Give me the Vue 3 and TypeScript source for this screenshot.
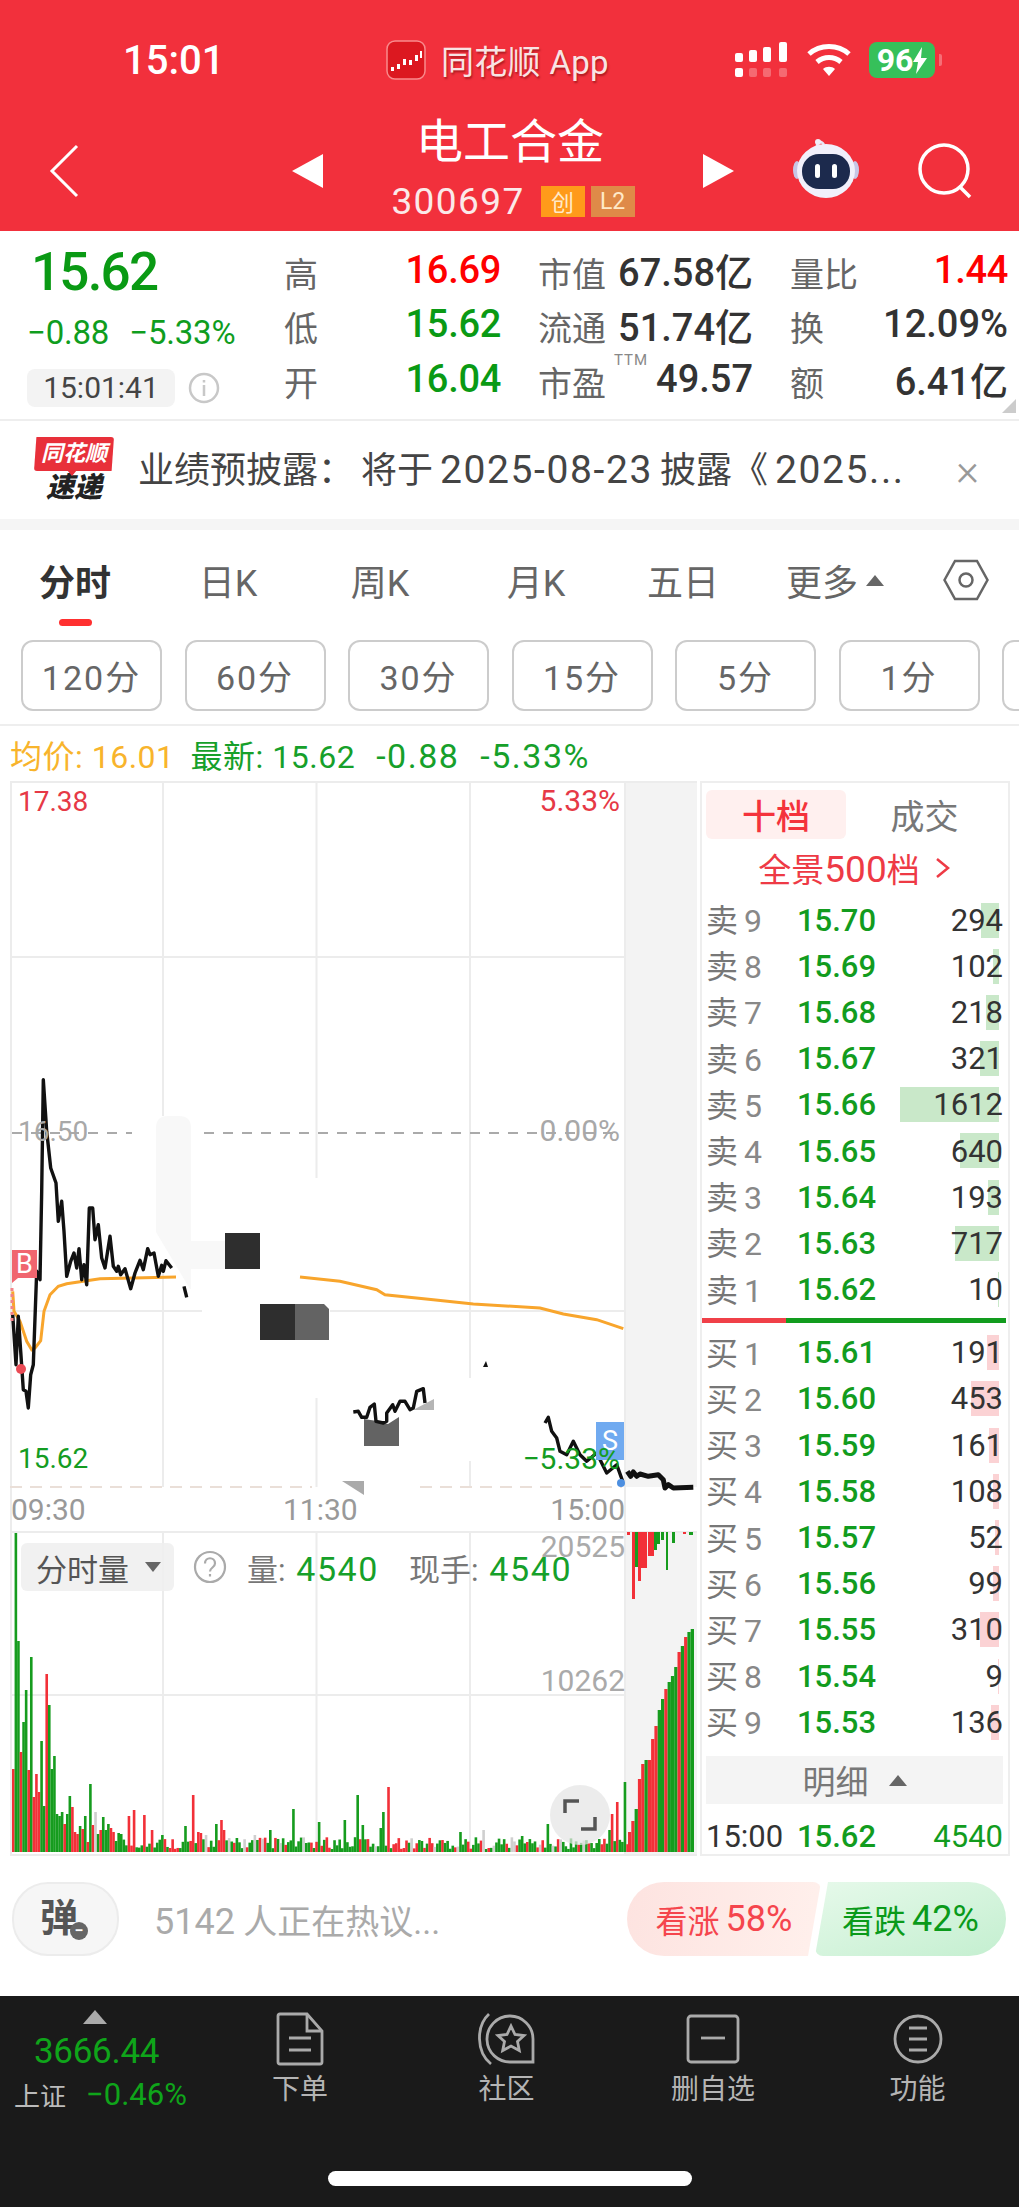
<template>
  <div class="page">
    <header class="header">
      <div class="status">
        <span class="clock">15:01</span>
        <div class="app-tag">
          <svg class="app-icon" width="40" height="40" viewBox="0 0 40 40">
            <rect x="1" y="1" width="38" height="38" rx="8" fill="#dc1820" stroke="#f98a8c" stroke-width="1.5" />
            <path d="M5 27h3v4H5zM11 24h3v5h-3zM17 19h3v6h-3zM23 20h3v5h-3zM29 15h3v6h-3zM34 11h2v7h-2z" fill="#fff" />
          </svg>
          <span class="app-name">同花顺 App</span>
        </div>
        <div class="status-right">
          <svg width="53" height="36" viewBox="0 0 53 36" fill="#fff">
            <rect x="1" y="11" width="8" height="9" rx="2" />
            <rect x="15" y="8" width="8" height="12" rx="2" />
            <rect x="29" y="5" width="8" height="15" rx="2" />
            <rect x="45" y="0" width="8" height="20" rx="2" />
            <rect x="1" y="26" width="8" height="9" rx="2" />
            <g opacity="0.28">
              <rect x="15" y="26" width="8" height="9" rx="2" />
              <rect x="29" y="26" width="8" height="9" rx="2" />
              <rect x="45" y="26" width="8" height="9" rx="2" />
            </g>
          </svg>
          <svg class="wifi" width="46" height="34" viewBox="0 0 46 34" fill="none" stroke="#fff" stroke-width="5">
            <path d="M3 11C14 1 32 1 43 11" />
            <path d="M11 19c7-6 17-6 24 0" />
            <path d="M23 33l-6-7c3-3 9-3 12 0z" fill="#fff" stroke="none" />
          </svg>
          <div class="battery">
            <span>96</span>
            <svg width="14" height="27" viewBox="0 0 14 27"><path d="M9 0L0 15h5l-2 12 11-16H8z" fill="#fff" /></svg>
          </div>
          <span class="battery-nub"></span>
        </div>
      </div>
      <div class="nav">
        <svg class="back" width="30" height="54" viewBox="0 0 30 54" fill="none" stroke="#fff" stroke-width="3">
          <path d="M28 2L3 27l25 25" />
        </svg>
        <span class="tri tri-left"></span>
        <div class="title">
          <div class="stock-name">电工合金</div>
          <div class="stock-code">
            <span class="code-num">300697</span>
            <span class="badge badge-chuang">创</span>
            <span class="badge badge-l2">L2</span>
          </div>
        </div>
        <span class="tri tri-right"></span>
        <svg class="robot" width="66" height="62" viewBox="0 0 66 62">
          <path d="M24 12C23 4 28 3 31 8" fill="none" stroke="#e8e4f4" stroke-width="2.5" />
          <circle cx="25" cy="5" r="3" fill="#f0eef8" />
          <ellipse cx="4" cy="33" rx="4" ry="9" fill="#c7c6e6" />
          <ellipse cx="62" cy="33" rx="4" ry="9" fill="#c7c6e6" />
          <ellipse cx="33" cy="34" rx="29" ry="27" fill="#f1f0fb" />
          <rect x="9" y="17" width="48" height="35" rx="17" fill="#1c2a4d" />
          <rect x="22" y="27" width="5" height="14" rx="2.5" fill="#fff" />
          <rect x="39" y="27" width="5" height="14" rx="2.5" fill="#fff" />
        </svg>
        <svg class="search" width="56" height="56" viewBox="0 0 56 56" fill="none" stroke="#fff" stroke-width="3.5">
          <circle cx="27" cy="26" r="24" />
          <path d="M42 43l11 11" />
        </svg>
      </div>
    </header>

    <section class="quote">
      <div class="quote-left">
        <div class="last-price">15.62</div>
        <div class="change-line"><span>−0.88</span><span>−5.33%</span></div>
        <div class="time-line">
          <span class="time-pill">15:01:41</span>
          <svg width="32" height="32" viewBox="0 0 32 32" fill="none" stroke="#c8c8c8" stroke-width="2.5">
            <circle cx="16" cy="16" r="14" />
            <path d="M16 13v11M16 8v2.5" />
          </svg>
        </div>
      </div>
      <div class="quote-grid">
        <div v-for="cell in quoteCells" :key="cell.label" class="quote-cell">
          <span class="quote-label">{{ cell.label }}<sup v-if="cell.ttm" class="ttm">TTM</sup></span>
          <span class="quote-value" :class="cell.tone">{{ cell.value }}</span>
        </div>
      </div>
      <span class="corner"></span>
    </section>

    <section class="notice">
      <div class="notice-logo">
        <div class="logo-tag">同花顺</div>
        <div class="logo-text">速递</div>
      </div>
      <p class="notice-text">业绩预披露：<span class="notice-rest">将于<b>2025-08-23</b>披露《<b>2025...</b></span></p>
      <span class="notice-close">×</span>
    </section>
    <div class="band"></div>

    <nav class="tabs">
      <span class="tab active">分时</span>
      <span class="tab">日K</span>
      <span class="tab">周K</span>
      <span class="tab">月K</span>
      <span class="tab">五日</span>
      <span class="tab">更多<i class="more-caret"></i></span>
      <span class="tab">
        <svg width="46" height="42" viewBox="0 0 46 42" fill="none" stroke="#666" stroke-width="2.5">
          <path d="M1.5 21L12 2h22l10.500 19L34 40H12z" />
          <circle cx="23" cy="21" r="6.5" />
        </svg>
      </span>
    </nav>
    <div class="periods">
      <span v-for="p in periods" :key="p" class="period">{{ p }}</span>
      <span class="period"></span>
    </div>
    <div class="legend">
      <span class="avg">均价: 16.01</span>
      <span class="latest">最新: 15.62</span>
      <span class="delta">-0.88</span>
      <span class="delta">-5.33%</span>
    </div>

    <main class="market">
      <div class="chart">
        <svg width="700" height="1075" viewBox="0 783 700 1075">
          <rect x="625" y="783" width="72" height="706" fill="#f3f3f3" />
          <rect x="625" y="1534" width="72" height="324" fill="#f3f3f3" />
          <path :d="gridPath" stroke="#ececec" stroke-width="2" fill="none" />
          <path d="M10 1489H312M420 1489H622" stroke="#eadfd8" stroke-width="2" stroke-dasharray="12 8" />
          <path d="M12 1135H132M204 1135H622" stroke="#aaa" stroke-width="2" stroke-dasharray="10 9" />

          <path d="M156 1130q0-12 12-12h11q12 0 12 12v113h34v28h-34v20h-1l-34-57z" fill="#f8f8f8" />
          <rect x="225" y="1235" width="35" height="36" fill="#2e2e2e" />
          <rect x="260" y="1306" width="35" height="36" fill="#2e2e2e" />
          <path d="M295 1306h29l5 5v31h-34z" fill="#636363" />
          <path d="M364 1421l13 2 11 3 11-7v29h-35z" fill="#636363" />
          <path d="M413 1412l21-11v11z" fill="#b5b5b5" />
          <path d="M342 1483h22v14z" fill="#aaa" />

          <polyline :points="avgLeft" class="avg-line" />
          <polyline :points="avgRight" class="avg-line" />
          <polyline :points="priceA" class="price-line" />
          <polyline :points="priceB" class="price-line" />
          <polyline :points="priceC" class="price-line" />
          <polyline :points="priceD" class="price-line" />
          <polyline :points="priceE" class="price-line thick" />
          <path d="M483 1369l3-6 2 6z" fill="#111" />

          <path d="M12 1252h25v28H18l-6 5z" fill="#f0666f" />
          <text x="24.5" y="1275" class="tag-text">B</text>
          <path d="M12 1290v34" stroke="#f3838a" stroke-width="3" stroke-dasharray="3 3" />
          <circle cx="21" cy="1371" r="5" fill="#ea4b55" />
          <rect x="596" y="1424" width="28" height="38" fill="#70aaf0" />
          <text x="610" y="1452" class="tag-text">S</text>
          <circle cx="621" cy="1485" r="4" fill="#4d8fe0" />

          <text x="18" y="813" class="label narrow" fill="#e63946">17.38</text>
          <text x="620" y="813" class="label end" fill="#e63946">5.33%</text>
          <text x="18" y="1143" class="label narrow" fill="#a8a8a8">16.50</text>
          <text x="620" y="1143" class="label end" fill="#a8a8a8">0.00%</text>
          <text x="18" y="1470" class="label narrow" fill="#149c22">15.62</text>
          <text x="620" y="1471" class="label end" fill="#149c22">−5.33%</text>
          <text x="11" y="1522" class="label" fill="#999">09:30</text>
          <text x="283" y="1522" class="label" fill="#999">11:30</text>
          <text x="625" y="1522" class="label end" fill="#999">15:00</text>

          <rect
            v-for="(b, i) in volumeBars"
            :key="i"
            :x="b.x"
            :y="1854 - b.h"
            width="2.6"
            :height="b.h"
            :fill="b.fill"
          />
          <rect
            v-for="(b, i) in closeBars"
            :key="'c' + i"
            :x="628 + i * 3.3"
            :y="1854 - b.h"
            width="3.3"
            :height="b.h"
            :fill="b.fill"
          />
          <rect
            v-for="(b, i) in topBars"
            :key="'t' + i"
            :x="b.x"
            y="1534"
            :width="b.w"
            :height="b.h"
            :fill="b.fill"
          />
          <text x="625" y="1559" class="label end" fill="#aaa">20525</text>
          <text x="625" y="1693" class="label end" fill="#aaa">10262</text>

          <circle cx="580" cy="1817" r="30" fill="#e4e4e4" opacity="0.72" />
          <path d="M565 1815v-12h14M595 1819v12h-14" fill="none" stroke="#555" stroke-width="3.5" />
        </svg>

        <div class="vol-legend">
          <div class="vol-picker">分时量<i class="vol-caret"></i></div>
          <svg width="34" height="34" viewBox="0 0 34 34" fill="none" stroke="#aaa" stroke-width="2.2">
            <circle cx="17" cy="17" r="15" />
            <path d="M12 13.500c0-7 10-7 10 0 0 4-5 4-5 8M17 24v2.500" />
          </svg>
          <span class="vol-item">量: <b>4540</b></span>
          <span class="vol-item">现手: <b>4540</b></span>
        </div>
      </div>

      <aside class="book">
        <div class="book-tabs">
          <span class="book-tab active">十档</span>
          <span class="book-tab">成交</span>
        </div>
        <div class="book-link">
          <span>全景<b>500</b>档</span>
          <svg width="16" height="24" viewBox="0 0 16 24" fill="none" stroke="#ee3a45" stroke-width="2.5"><path d="M2 3l11 9-11 9" /></svg>
        </div>
        <div v-for="r in asks" :key="r.label" class="book-row">
          <i class="depth ask" :style="{ width: r.bar + 'px' }"></i>
          <span class="book-label">卖<em>{{ r.label }}</em></span>
          <span class="book-price">{{ r.price }}</span>
          <span class="book-qty">{{ r.qty }}</span>
        </div>
        <div class="book-split"><i></i><b></b></div>
        <div v-for="r in bids" :key="r.label" class="book-row">
          <i class="depth bid" :style="{ width: r.bar + 'px' }"></i>
          <span class="book-label">买<em>{{ r.label }}</em></span>
          <span class="book-price">{{ r.price }}</span>
          <span class="book-qty">{{ r.qty }}</span>
        </div>
        <div class="book-detail">明细<i></i></div>
        <div class="book-row book-last">
          <span class="book-time">15:00</span>
          <span class="book-price">15.62</span>
          <span class="book-qty up">4540</span>
        </div>
      </aside>
    </main>

    <section class="talk">
      <div class="danmu">弹<i>−</i></div>
      <span class="talk-text"><b>5142</b> 人正在热议...</span>
      <div class="vote">
        <span class="vote-up">看涨<b>58%</b></span>
        <span class="vote-down">看跌<b>42%</b></span>
      </div>
    </section>

    <footer class="dock">
      <div class="dock-row">
        <div class="index">
          <i class="index-caret"></i>
          <div class="index-value">3666.44</div>
          <div class="index-line"><span>上证</span><b>−0.46%</b></div>
        </div>
        <div class="dock-item">
          <svg width="50" height="54" viewBox="0 0 50 54" class="dock-icon">
            <path d="M3 4q0-2 2-2h27l15 17v31q0 2-2 2H5q-2 0-2-2z" />
            <path d="M32 2v17h15M14 26h22M14 38h22" />
          </svg>
          <span>下单</span>
        </div>
        <div class="dock-item">
          <svg width="58" height="54" viewBox="0 0 58 54" class="dock-icon">
            <path d="M55 50H33a23 23 0 1 1 22-23z" />
            <path d="M33 14l4 8.500 9 1-6.500 6 1.800 9-8.300-4.500-8.300 4.500 1.800-9-6.500-6 9-1z" />
            <path d="M11 2C-2 14-2 40 13 52" />
          </svg>
          <span>社区</span>
        </div>
        <div class="dock-item">
          <svg width="54" height="50" viewBox="0 0 54 50" class="dock-icon">
            <rect x="2" y="2" width="50" height="46" rx="3" />
            <path d="M15 24h24" />
          </svg>
          <span>删自选</span>
        </div>
        <div class="dock-item">
          <svg width="50" height="50" viewBox="0 0 50 50" class="dock-icon">
            <circle cx="25" cy="25" r="23" />
            <path d="M16 14h18M16 25h18M16 36h18" />
          </svg>
          <span>功能</span>
        </div>
      </div>
      <div class="home-bar"></div>
    </footer>
  </div>
</template>

<script setup lang="ts">
type Pt = [number, number]

// the chart svg uses page coordinates, traced points come from 3x crops
const crop = (pts: Pt[], ox: number, oy: number) =>
  pts.map(([x, y]) => `${(x / 3 + ox).toFixed(1)},${(y / 3 + oy).toFixed(1)}`).join(' ')

const priceA = crop([
  [38, 770], [48, 920], [55, 775], [62, 880], [70, 995], [78, 1000], [85, 1050], [92, 950], [100, 920],
  [110, 640], [120, 665], [125, 400], [130, 65], [140, 220], [152, 330], [168, 375], [175, 490], [185, 430],
  [192, 520], [200, 655], [212, 610], [222, 585], [230, 630], [237, 572], [245, 665], [252, 620], [260, 680],
  [268, 450], [278, 450], [285, 545], [295, 500], [305, 600], [315, 630], [330, 535], [340, 625], [350, 640],
  [355, 625], [362, 650], [375, 632], [392, 692], [405, 645], [420, 607], [430, 635], [443, 572], [450, 590],
  [462, 585], [475, 655], [485, 622], [490, 640], [498, 608], [515, 630]
], 0, 1060)
const priceB = crop([[552, 685], [560, 718]], 0, 1060)
const priceC = crop([
  [40, 462], [55, 460], [65, 478], [80, 478], [90, 448], [103, 438], [108, 490], [130, 495], [140, 490],
  [140, 465], [158, 440], [165, 460], [180, 430], [195, 430], [210, 455], [220, 450], [230, 400], [250, 392], [255, 435]
], 340, 1260)
const priceD = crop([
  [615, 495], [625, 478], [635, 520], [650, 540], [660, 580], [680, 590], [700, 550], [720, 590], [740, 610],
  [770, 585], [800, 645], [830, 620], [848, 670]
], 340, 1260)
const priceE = crop([
  [862, 640], [872, 655], [880, 642], [890, 655], [900, 648], [925, 655], [955, 650], [970, 665], [975, 690],
  [985, 680], [1000, 690], [1060, 688]
], 340, 1260)
const avgLeft = crop([
  [38, 700], [42, 760], [60, 790], [80, 850], [95, 875], [105, 870], [122, 848], [132, 760], [150, 710], [175, 685],
  [200, 677], [250, 670], [300, 662], [400, 660], [528, 657]
], 0, 1060)
const avgRight = crop([
  [-120, 57], [0, 70], [110, 95], [135, 110], [280, 125], [400, 138], [600, 150], [670, 168], [770, 185], [850, 212]
], 340, 1260)

const gridPath = [
  'M11 783V1858', 'M10 784H697', 'M163 783V1118', 'M163 1273V1489', 'M316.5 783V1180', 'M316.5 1400V1489',
  'M470 783V1380', 'M470 1463V1489', 'M10 959H625', 'M10 1313H202', 'M330 1313H625',
  'M10 1534H697', 'M10 1697H625', 'M163 1534V1854', 'M316.5 1534V1854', 'M470 1534V1854', 'M625 783V1858', 'M10 1857H697'
].join('')

const RED = '#f23038'
const GREEN = '#169c1e'
const GREY = '#cfcfcf'
const tone: Record<string, string> = { r: RED, g: GREEN, n: GREY }

// opening minutes, traced bar by bar
const opening = 'r83 g319 g211 r100 g130 g162 r82 g195 r55 r78 r60 g111 g46 r178 g147 g83 g96 g38 g36 g40 r28 g38 g56 r45 r20 r18 g26 r23 g36 r10 g68 r27 n40 g18 r22 g35 g22 g28 r24 r20 g11 g19 g18'
  .split(' ')
  .map(s => ({ c: s[0], h: Number(s.slice(1)) }))

// later spikes as page x, height, colour
const spikes: [number, number, string][] = [
  [127, 36, 'r'], [134, 42, 'r'], [142, 37, 'r'], [150, 22, 'r'], [160, 17, 'g'], [183, 26, 'g'], [191, 57, 'r'],
  [196, 20, 'r'], [200, 19, 'r'], [205, 17, 'n'], [215, 28, 'g'], [221, 32, 'r'], [224, 22, 'r'], [236, 14, 'g'],
  [254, 17, 'n'], [269, 22, 'g'], [293, 43, 'g'], [319, 30, 'g'], [343, 32, 'g'], [356, 57, 'g'], [362, 27, 'g'],
  [380, 24, 'g'], [383, 40, 'g'], [387, 65, 'r'], [458, 20, 'g'], [482, 22, 'n'], [522, 16, 'g'], [547, 28, 'g'],
  [608, 22, 'g'], [612, 38, 'r'], [617, 50, 'r'], [623, 70, 'g']
]

const volumeBars = Array.from({ length: 240 }, (_, i) => {
  const noise = Math.abs(Math.sin(i * 12.9898) * 43758.5453) % 1
  const pick = Math.abs(Math.sin(i * 78.233) * 12543.123) % 1
  const base = { c: pick < 0.6 ? 'g' : pick < 0.92 ? 'r' : 'n', h: 3 + noise * 12 }
  const bar = opening[i] ?? base
  return { x: 12 + i * 2.57, h: bar.h, c: bar.c, fill: tone[bar.c] }
})
spikes.forEach(([x, h, c]) => {
  const bar = volumeBars[Math.round((x - 12) / 2.57)]
  bar.h = h
  bar.fill = tone[c]
})

const closeBars = 'r20 r31 g43 r73 r88 g92 r92 r113 r126 g142 g153 r163 g170 g176 g185 r200 g206 r215 g220 g223'
  .split(' ')
  .map(s => ({ h: Number(s.slice(1)), fill: tone[s[0]] }))

const topBars = [
  { x: 627, w: 3, h: 3, fill: RED }, { x: 632, w: 3, h: 67, fill: RED }, { x: 635, w: 3, h: 35, fill: GREEN },
  { x: 638, w: 3, h: 49, fill: RED }, { x: 641, w: 3, h: 36, fill: RED }, { x: 644, w: 3, h: 36, fill: RED },
  { x: 648, w: 3, h: 24, fill: RED }, { x: 651, w: 3, h: 24, fill: RED }, { x: 654, w: 3, h: 18, fill: GREEN },
  { x: 657, w: 3, h: 12, fill: GREEN }, { x: 661, w: 3, h: 8, fill: GREEN }, { x: 666, w: 2, h: 38, fill: GREEN },
  { x: 672, w: 3, h: 11, fill: GREEN }, { x: 683, w: 3, h: 2, fill: RED }, { x: 689, w: 4, h: 3, fill: GREEN }
]

const quoteCells = [
  { label: '高', value: '16.69', tone: 'up' },
  { label: '市值', value: '67.58亿', tone: 'dark' },
  { label: '量比', value: '1.44', tone: 'up' },
  { label: '低', value: '15.62', tone: 'down' },
  { label: '流通', value: '51.74亿', tone: 'dark' },
  { label: '换', value: '12.09%', tone: 'dark' },
  { label: '开', value: '16.04', tone: 'down' },
  { label: '市盈', value: '49.57', tone: 'dark', ttm: true },
  { label: '额', value: '6.41亿', tone: 'dark' }
]

const periods = ['120分', '60分', '30分', '15分', '5分', '1分']

const asks = [
  { label: 9, price: '15.70', qty: 294, bar: 18 },
  { label: 8, price: '15.69', qty: 102, bar: 6 },
  { label: 7, price: '15.68', qty: 218, bar: 13 },
  { label: 6, price: '15.67', qty: 321, bar: 19 },
  { label: 5, price: '15.66', qty: 1612, bar: 99 },
  { label: 4, price: '15.65', qty: 640, bar: 39 },
  { label: 3, price: '15.64', qty: 193, bar: 11 },
  { label: 2, price: '15.63', qty: 717, bar: 44 },
  { label: 1, price: '15.62', qty: 10, bar: 1 }
]

const bids = [
  { label: 1, price: '15.61', qty: 191, bar: 12 },
  { label: 2, price: '15.60', qty: 453, bar: 28 },
  { label: 3, price: '15.59', qty: 161, bar: 10 },
  { label: 4, price: '15.58', qty: 108, bar: 6 },
  { label: 5, price: '15.57', qty: 52, bar: 4 },
  { label: 6, price: '15.56', qty: 99, bar: 6 },
  { label: 7, price: '15.55', qty: 310, bar: 19 },
  { label: 8, price: '15.54', qty: 9, bar: 1 },
  { label: 9, price: '15.53', qty: 136, bar: 8 }
]
</script>

<style>
html,
body {
  margin: 0;
  background: #fff;
}
</style>

<style scoped>
.page {
  width: 1019px;
  height: 2209px;
  overflow: hidden;
  background: #fff;
  font-family: Roboto, "Noto Sans CJK SC", sans-serif;
  color: #333;
}

/* header */
.header {
  height: 231px;
  background: #f2303c;
  color: #fff;
  overflow: hidden;
}
.status {
  display: grid;
  grid-template-columns: 386px 343px 1fr;
  align-items: center;
  height: 40px;
  padding-top: 36px;
}
.clock {
  padding-left: 123px;
  font-size: 40px;
  font-weight: 500;
}
.app-tag {
  display: flex;
  align-items: center;
  gap: 15px;
}
.app-name {
  font-size: 33px;
  letter-spacing: 0.3px;
  color: #f8e4e4;
  text-shadow: 1px 2px 2px rgba(90, 0, 0, 0.45);
}
.status-right {
  display: flex;
  align-items: center;
  padding-left: 5px;
}
.wifi {
  margin-left: 19px;
}
.battery {
  display: flex;
  align-items: center;
  justify-content: center;
  width: 66px;
  height: 36px;
  margin-left: 17px;
  border-radius: 8px;
  background: #36c05a;
  font-size: 32px;
  font-weight: 700;
}
.battery-nub {
  width: 3px;
  height: 12px;
  margin-left: 4px;
  border-radius: 0 2px 2px 0;
  background: rgba(255, 255, 255, 0.3);
}
.nav {
  display: grid;
  grid-template-columns: 292px 31px 380px 31px 59px 65px 59px 56px;
  align-items: center;
  margin-top: 39px;
}
.back {
  grid-column: 1;
  margin-left: 49px;
  margin-top: 10px;
}
.tri {
  width: 0;
  height: 0;
  margin-top: 10px;
  border-top: 17px solid transparent;
  border-bottom: 17px solid transparent;
}
.tri-left {
  border-right: 31px solid #fff;
}
.tri-right {
  border-left: 31px solid #fff;
}
.title {
  text-align: center;
}
.stock-name {
  height: 50px;
  margin-left: -6px;
  font-size: 47px;
  line-height: 54px;
}
.stock-code {
  display: flex;
  align-items: center;
  justify-content: center;
  gap: 6px;
  height: 32px;
  margin-top: 20px;
}
.code-num {
  margin-right: 10px;
  font-size: 37px;
  letter-spacing: 1.4px;
  color: #fbe9e9;
}
.badge {
  display: flex;
  align-items: center;
  justify-content: center;
  width: 44px;
  height: 31px;
  font-size: 23px;
  color: #ffe9c8;
}
.badge-chuang {
  background: #ff9a1a;
}
.badge-l2 {
  background: #df8a48;
}
.robot {
  grid-column: 6;
  margin-top: 4px;
}
.search {
  grid-column: 8;
  margin-top: 10px;
}

/* quote block */
.quote {
  position: relative;
  display: flex;
  height: 188px;
  border-bottom: 2px solid #eee;
}
.quote-left {
  width: 284px;
  padding-left: 27px;
  box-sizing: border-box;
}
.last-price {
  height: 60px;
  margin-top: 11px;
  padding-left: 4px;
  font-size: 53px;
  line-height: 60px;
  letter-spacing: -1.8px;
  font-weight: 500;
  color: #0a9a14;
}
.change-line {
  display: flex;
  gap: 20px;
  height: 36px;
  margin-top: 13px;
  font-size: 33px;
  line-height: 36px;
  letter-spacing: -0.2px;
  color: #0f9d1e;
}
.time-line {
  display: flex;
  align-items: center;
  gap: 13px;
  margin-top: 18px;
}
.time-pill {
  display: block;
  width: 148px;
  height: 38px;
  border-radius: 8px;
  background: #f3f3f3;
  font-size: 30px;
  line-height: 38px;
  text-align: center;
  color: #444;
}
.quote-grid {
  display: grid;
  grid-template-columns: 217px 215px 218px;
  grid-auto-rows: 54.5px;
  column-gap: 37px;
  padding-top: 14px;
}
.quote-cell {
  display: flex;
  align-items: center;
  justify-content: space-between;
}
.quote-label {
  position: relative;
  font-size: 34px;
  color: #666;
}
.quote-value {
  margin-bottom: 5px;
  font-size: 38px;
  font-weight: 500;
  letter-spacing: -0.3px;
}
.quote-value.up {
  color: #f00;
}
.quote-value.down {
  color: #0a9a14;
}
.quote-value.dark {
  color: #333;
  font-size: 38px;
  letter-spacing: 0;
}
.ttm {
  position: absolute;
  left: 76px;
  top: -6px;
  font-size: 15px;
  line-height: 18px;
  letter-spacing: 1px;
  color: #888;
}
.corner {
  position: absolute;
  right: 3px;
  bottom: 6px;
  width: 0;
  height: 0;
  border-left: 14px solid transparent;
  border-bottom: 14px solid #ccc;
}

/* notice */
.notice {
  display: flex;
  align-items: center;
  height: 98px;
  padding-left: 34px;
}
.notice-logo {
  position: relative;
  width: 80px;
  text-align: center;
}
.notice-logo::after {
  content: "";
  position: absolute;
  left: 33px;
  top: 33px;
  width: 0;
  height: 0;
  border-left: 5px solid transparent;
  border-right: 5px solid transparent;
  border-top: 6px solid #e8303a;
}
.logo-tag {
  height: 34px;
  background: #e8303a;
  border-radius: 3px;
  clip-path: polygon(3% 0, 100% 0, 97% 100%, 0 100%);
  font-size: 22px;
  font-weight: 700;
  font-style: italic;
  line-height: 34px;
  color: #fff;
}
.logo-text {
  height: 30px;
  margin-top: 2px;
  font-size: 28px;
  font-weight: 900;
  font-style: italic;
  line-height: 30px;
  color: #222;
}
.notice-text {
  flex: 1;
  margin: 0 0 0 24px;
  font-size: 36px;
  line-height: 48px;
  color: #444;
  white-space: nowrap;
}
.notice-rest {
  margin-left: 7px;
}
.notice-rest b {
  margin: 0 7px;
  font-size: 39px;
  font-weight: 400;
  letter-spacing: 1.6px;
}
.notice-close {
  margin-right: 40px;
  font-size: 44px;
  line-height: 44px;
  font-weight: 300;
  color: #999;
}
.band {
  height: 11px;
  background: #f5f5f5;
}

/* chart tabs */
.tabs {
  display: grid;
  grid-template-columns: 150px 156px 148px 164px 130px 174px 88px;
  height: 110px;
}
.tab {
  position: relative;
  display: flex;
  align-items: center;
  justify-content: center;
  height: 100px;
  font-size: 36px;
  color: #666;
}
.tab.active {
  font-weight: 700;
  color: #333;
}
.tab.active::after {
  content: "";
  position: absolute;
  left: 59px;
  bottom: 4px;
  width: 33px;
  height: 7px;
  border-radius: 4px;
  background: #ff3030;
}
.more-caret {
  width: 0;
  height: 0;
  margin-left: 8px;
  border-left: 9px solid transparent;
  border-right: 9px solid transparent;
  border-bottom: 11px solid #666;
}
.periods {
  display: flex;
  gap: 22.5px;
  height: 71px;
  padding-left: 21px;
  padding-bottom: 13px;
  border-bottom: 2px solid #eee;
  overflow: hidden;
}
.period {
  flex: none;
  display: flex;
  align-items: center;
  justify-content: center;
  width: 141px;
  height: 71px;
  box-sizing: border-box;
  border: 2px solid #ccc;
  border-radius: 12px;
  font-size: 34px;
  letter-spacing: 2px;
  color: #666;
}
.legend {
  display: flex;
  align-items: baseline;
  gap: 21px;
  height: 55px;
  padding-left: 10px;
  font-size: 32px;
  line-height: 61px;
  letter-spacing: 0.5px;
  color: #16a02a;
}
.avg {
  color: #f8b42c;
}
.latest {
  margin-left: -5px;
}
.delta {
  font-size: 34px;
  letter-spacing: 1.5px;
}

/* chart + book */
.market {
  display: flex;
  height: 1075px;
}
.chart {
  position: relative;
  width: 700px;
  flex: none;
}
.chart svg {
  display: block;
}
.price-line {
  fill: none;
  stroke: #111;
  stroke-width: 3.4;
  stroke-linejoin: round;
}
.price-line.thick {
  stroke-width: 5;
}
.avg-line {
  fill: none;
  stroke: #f8a52c;
  stroke-width: 3;
}
.label {
  font-size: 30px;
}
.label.narrow {
  font-size: 28px;
}
.label.end {
  text-anchor: end;
}
.tag-text {
  font-size: 27px;
  fill: #fff;
  text-anchor: middle;
}
.vol-legend {
  position: absolute;
  left: 21px;
  top: 762px;
  display: flex;
  align-items: center;
  height: 48px;
}
.vol-legend > svg {
  margin-left: 19px;
}
.vol-picker {
  display: flex;
  align-items: center;
  width: 153px;
  height: 48px;
  box-sizing: border-box;
  padding-left: 15px;
  border-radius: 6px;
  background: rgba(240, 240, 240, 0.9);
  font-size: 31px;
  color: #555;
}
.vol-caret {
  width: 0;
  height: 0;
  margin-left: 16px;
  border-left: 8px solid transparent;
  border-right: 8px solid transparent;
  border-top: 10px solid #666;
}
.vol-item {
  margin-left: 20px;
  font-size: 31px;
  color: #777;
}
.vol-item + .vol-item {
  margin-left: 30px;
}
.vol-item b {
  margin-left: 3px;
  font-weight: 400;
  font-size: 34px;
  letter-spacing: 1.6px;
  color: #16a02a;
}
.book {
  flex: none;
  width: 310px;
  height: 1075px;
  box-sizing: border-box;
  padding: 7px 5px 0 4px;
  border: 2px solid #eee;
}
.book-tabs {
  display: grid;
  grid-template-columns: 140px 1fr;
  height: 49px;
}
.book-tab {
  display: flex;
  align-items: center;
  justify-content: center;
  border-radius: 6px;
  font-size: 34px;
  color: #777;
}
.book-tab.active {
  background: #fff0ef;
  color: #f4333c;
  font-weight: 500;
}
.book-link {
  display: flex;
  align-items: center;
  justify-content: center;
  gap: 15px;
  height: 58px;
  font-size: 33px;
  color: #ee3a45;
}
.book-link b {
  font-size: 37px;
  font-weight: 400;
}
.book-row {
  position: relative;
  display: grid;
  grid-template-columns: 91px 1fr auto;
  align-items: center;
  height: 46.2px;
}
.book-row > span {
  position: relative;
}
.depth {
  position: absolute;
  right: 4px;
  top: 5.5px;
  height: 35px;
}
.depth.ask {
  background: #c9e8c9;
}
.depth.bid {
  background: #fbd2d4;
}
.book-label {
  margin-top: -4px;
  font-size: 32px;
  color: #777;
}
.book-label em {
  margin-left: 6px;
  font-style: normal;
  font-size: 32px;
  color: #888;
}
.book-price {
  font-size: 31px;
  font-weight: 500;
  color: #129c1e;
}
.book-qty {
  font-size: 31px;
  color: #333;
}
.book-qty.up {
  color: #129c1e;
}
.book-split {
  display: flex;
  height: 5px;
  margin: 5px -3px 7px -4px;
}
.book-split i {
  width: 84px;
  background: #f04048;
}
.book-split b {
  flex: 1;
  background: #129c1e;
}
.book-detail {
  display: flex;
  align-items: center;
  justify-content: center;
  gap: 20px;
  height: 48px;
  margin-top: 11px;
  background: #f4f4f4;
  font-size: 33px;
  color: #777;
}
.book-detail i {
  width: 0;
  height: 0;
  border-left: 9px solid transparent;
  border-right: 9px solid transparent;
  border-bottom: 11px solid #666;
}
.book-last {
  margin-top: 9px;
  height: 46px;
}
.book-time {
  font-size: 31px;
  color: #333;
}

/* comment row */
.talk {
  display: flex;
  align-items: center;
  height: 140px;
  padding: 0 13px 14px 12px;
  box-sizing: border-box;
}
.danmu {
  position: relative;
  flex: none;
  width: 107px;
  height: 74px;
  box-sizing: border-box;
  padding-left: 26px;
  border: 2px solid #ececec;
  border-radius: 36px;
  background: #f6f6f6;
  font-size: 38px;
  font-weight: 700;
  line-height: 68px;
  color: #555;
}
.danmu i {
  position: absolute;
  left: 56px;
  top: 38px;
  width: 18px;
  height: 18px;
  border-radius: 50%;
  background: #666;
  font-size: 16px;
  font-style: normal;
  line-height: 18px;
  text-align: center;
  color: #fff;
}
.talk-text {
  flex: 1;
  margin-left: 35px;
  font-size: 34px;
  color: #aaa;
}
.talk-text b {
  font-size: 36px;
  font-weight: 400;
}
.vote {
  display: flex;
  font-size: 32px;
}
.vote span {
  display: flex;
  align-items: center;
  justify-content: center;
  gap: 6px;
  height: 74px;
}
.vote b {
  font-size: 36px;
  font-weight: 400;
}
.vote-up {
  width: 194px;
  border-radius: 37px 8px 8px 37px;
  background: linear-gradient(100deg, #fde3e0, #fff0ec);
  clip-path: polygon(0 0, 100% 0, calc(100% - 13px) 100%, 0 100%);
  color: #f5454d;
}
.vote-down {
  width: 191px;
  margin-left: -6px;
  border-radius: 8px 37px 37px 8px;
  background: linear-gradient(160deg, #e6f9ea, #c4efd0);
  clip-path: polygon(13px 0, 100% 0, 100% 100%, 0 100%);
  color: #0a9a1a;
}

/* dark dock */
.dock {
  height: 211px;
  background: #1a1a1a;
  overflow: hidden;
}
.dock-row {
  display: grid;
  grid-template-columns: 197px 206px 207px 206px 203px;
  height: 175px;
  box-sizing: border-box;
  padding-top: 14px;
}
.index {
  padding-left: 14px;
}
.index-caret {
  display: block;
  width: 0;
  height: 0;
  margin-left: 69px;
  border-left: 12px solid transparent;
  border-right: 12px solid transparent;
  border-bottom: 14px solid #aaa;
}
.index-value {
  height: 40px;
  margin-top: 8px;
  padding-left: 20px;
  font-size: 35px;
  line-height: 40px;
  letter-spacing: -0.3px;
  color: #0fa51a;
}
.index-line {
  display: flex;
  align-items: center;
  gap: 20px;
  height: 36px;
  margin-top: 4px;
}
.index-line span {
  font-size: 26px;
  color: #bbb;
}
.index-line b {
  font-size: 31px;
  font-weight: 400;
  color: #0fa51a;
}
.dock-item {
  display: flex;
  flex-direction: column;
  align-items: center;
  padding-top: 2px;
  font-size: 28px;
  color: #b4b4b4;
}
.dock-item span {
  margin-top: 6px;
  line-height: 36px;
}
.dock-item svg {
  height: 54px;
}
.dock-icon {
  fill: none;
  stroke: #aaa;
  stroke-width: 2.8;
}
.home-bar {
  width: 364px;
  height: 15px;
  margin: 0 auto;
  border-radius: 8px;
  background: #fff;
}
</style>
